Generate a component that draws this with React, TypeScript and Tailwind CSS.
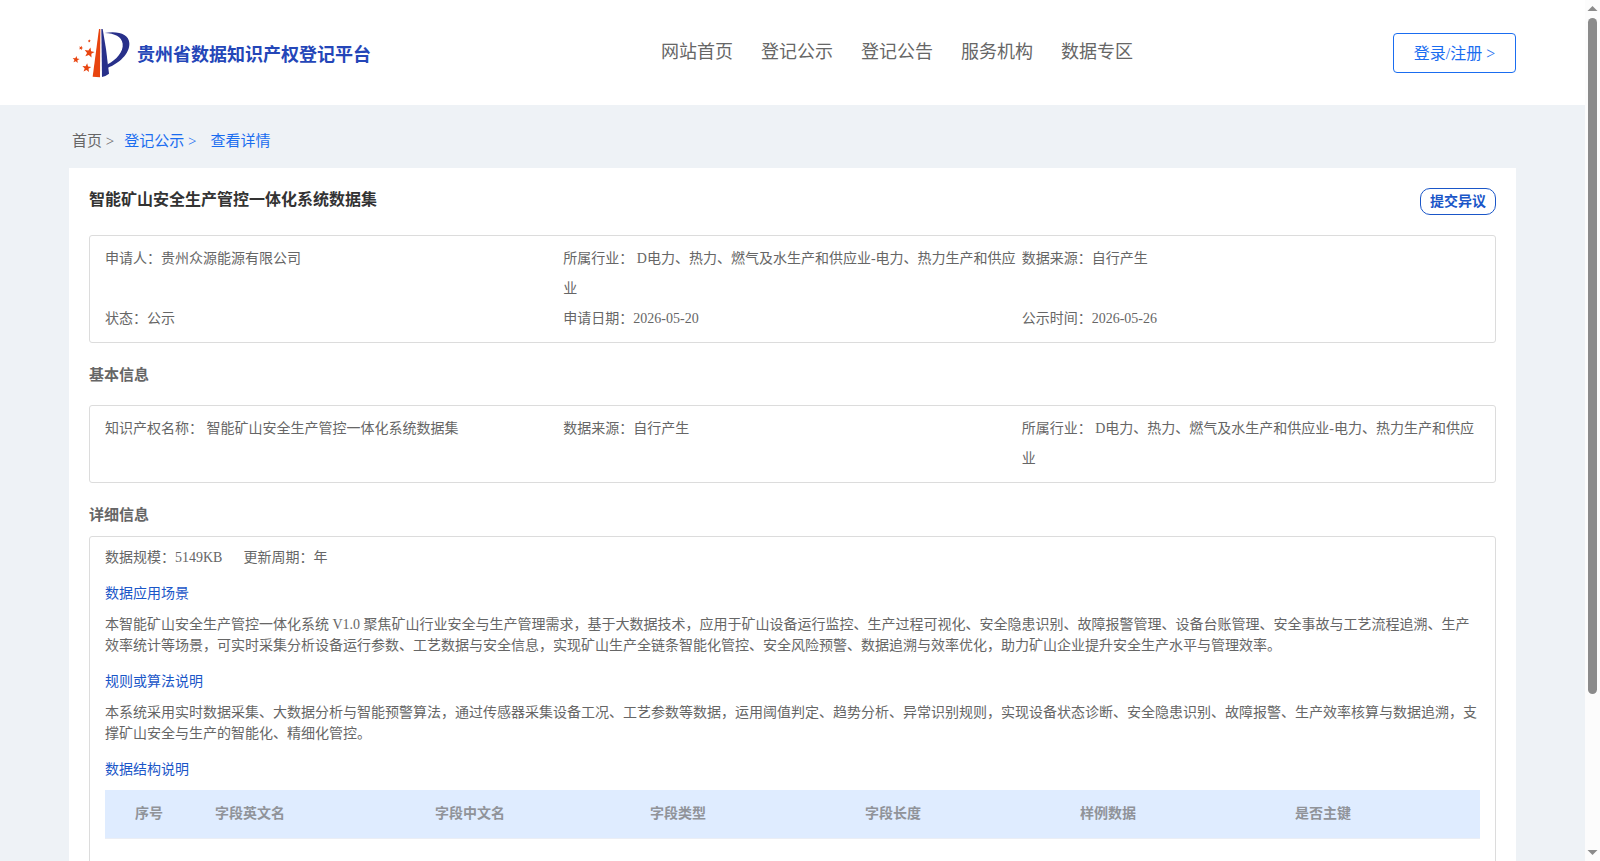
import React from 'react';

const NAV_ITEMS = ['网站首页', '登记公示', '登记公告', '服务机构', '数据专区'];

const INDUSTRY = '所属行业： D电力、热力、燃气及水生产和供应业-电力、热力生产和供应业';

const SUMMARY = [
  '申请人：贵州众源能源有限公司',
  INDUSTRY,
  '数据来源：自行产生',
  '状态：公示',
  '申请日期：2026-05-20',
  '公示时间：2026-05-26',
];

const BASIC = ['知识产权名称： 智能矿山安全生产管控一体化系统数据集', '数据来源：自行产生', INDUSTRY];

const COLUMNS = [
  { title: '序号', className: 'w-[100px] pl-[30px]' },
  { title: '字段英文名', className: 'w-[220px] pl-[10px]' },
  { title: '字段中文名', className: 'w-[215px] pl-[10px]' },
  { title: '字段类型', className: 'w-[215px] pl-[10px]' },
  { title: '字段长度', className: 'w-[215px] pl-[10px]' },
  { title: '样例数据', className: 'w-[215px] pl-[10px]' },
  { title: '是否主键', className: 'pl-[10px]' },
];

const Star: React.FC<{ x: number; y: number; r: number; turn?: number }> = ({ x, y, r, turn = 0 }) => (
  <path
    d="M0-10 2.6-3.4 9.5-3.1 4.1 1.3 5.9 8.1 0 4.3-5.9 8.1-4.1 1.3-9.5-3.1-2.6-3.4Z"
    transform={`translate(${x} ${y}) rotate(${turn}) scale(${r / 10})`}
    fill="#e8440f"
  />
);

const Logo: React.FC = () => (
  <svg viewBox="33 36 180 156" className="h-[52px] w-[60px] shrink-0" aria-hidden="true">
    <path d="M117 42h4l-1 145-22-2z" fill="#e8440f" />
    <path d="M124 42h4l10 60 9 74q-9 7-21 10z" fill="#28308a" />
    <path
      d="M134 54c42-7 72 4 74 30 2 32-32 62-64 74l-1-10c26-14 48-38 45-62-3-21-24-31-54-32z"
      fill="#28308a"
    />
    <Star x={88} y={113} r={16} turn={12} />
    <Star x={48} y={134} r={11} turn={8} />
    <Star x={80} y={159} r={14} turn={6} />
    <Star x={63} y={99} r={7} turn={20} />
    <Star x={88} y={78} r={5} turn={10} />
  </svg>
);

const Header: React.FC = () => (
  <header className="flex h-[105px] items-center justify-between bg-white px-[69px]">
    <a href="#" className="flex w-[332px] items-center gap-1.5 pl-0.5">
      <Logo />
      <span className="pt-1.5 text-[18px] font-bold whitespace-nowrap text-[#2446b8]">
        贵州省数据知识产权登记平台
      </span>
    </a>
    <nav className="flex gap-7 text-[18px] text-[#666]">
      {NAV_ITEMS.map((item) => (
        <a key={item} href="#" className="whitespace-nowrap hover:text-[#1a6df0]">
          {item}
        </a>
      ))}
    </nav>
    <button
      type="button"
      className="h-10 w-[123px] rounded-sm border border-[#1a6df0] pt-0.5 text-[16px] whitespace-nowrap text-[#1a6df0]"
    >
      登录/注册 &gt;
    </button>
  </header>
);

const InfoBox: React.FC<{ items: string[] }> = ({ items }) => (
  <ul className="grid grid-cols-3 rounded-[3px] border border-[#dcdcdc] px-[15px] py-2 leading-[30px]">
    {items.map((item) => (
      <li key={item}>{item}</li>
    ))}
  </ul>
);

const Detail: React.FC<{ title: string; children: React.ReactNode }> = ({ title, children }) => (
  <section>
    <h3 className="mt-[15px] mb-[10px] leading-[21px] text-[#1a56c8]">{title}</h3>
    {children}
  </section>
);

const ScrollBar: React.FC = () => (
  <div className="flex w-[15px] shrink-0 flex-col items-center bg-[#fcfcfc]" aria-hidden="true">
    <svg viewBox="0 0 15 18" className="h-[18px] w-[15px] shrink-0">
      <path d="M7.5 6 12.5 11h-10z" fill="#8b8b8b" />
    </svg>
    <div className="w-[9px] grow-[676] rounded-full bg-[#8b8b8b]" />
    <div className="grow-[149]" />
    <svg viewBox="0 0 15 18" className="h-[18px] w-[15px] shrink-0">
      <path d="M7.5 12 2.5 7h10z" fill="#8b8b8b" />
    </svg>
  </div>
);

const App: React.FC = () => {
  return (
    <div className="flex h-screen font-['Liberation_Serif','Noto_Sans_CJK_SC',serif] text-[14px] text-[#666]">
      <div className="min-w-0 flex-1 overflow-y-auto bg-[#eef2f6] [scrollbar-width:none]">
        <Header />

        <main className="px-[69px]">
          <nav className="flex h-[63px] items-center pt-[9px] pl-[3px] text-[15px]">
            <a href="#">首页 &gt;</a>
            <a href="#" className="ml-[10px] text-[#1a6df0]">
              登记公示 &gt;
            </a>
            <a href="#" className="ml-[14px] text-[#1a6df0]">
              查看详情
            </a>
          </nav>

          <div className="bg-white px-5 pt-5 pb-10">
            <div className="mb-5 flex items-start justify-between">
              <h1 className="text-[16px] leading-6 font-bold text-[#333]">智能矿山安全生产管控一体化系统数据集</h1>
              <button
                type="button"
                className="h-[27px] w-[76px] rounded-[10px] border border-[#1a56c8] font-bold text-[#1a56c8]"
              >
                提交异议
              </button>
            </div>

            <InfoBox items={SUMMARY} />

            <h2 className="mt-[21px] mb-[19px] text-[15px] leading-[22px] font-bold">基本信息</h2>
            <InfoBox items={BASIC} />

            <h2 className="mt-[21px] mb-[10px] text-[15px] leading-[22px] font-bold">详细信息</h2>
            <div className="rounded-[3px] border border-[#dcdcdc] px-[15px] pt-[10px] pb-8">
              <p className="flex gap-[21px] leading-[21px]">
                <span>数据规模：5149KB</span>
                <span>更新周期：年</span>
              </p>

              <Detail title="数据应用场景">
                <p className="leading-[21px]">
                  本智能矿山安全生产管控一体化系统 V1.0
                  聚焦矿山行业安全与生产管理需求，基于大数据技术，应用于矿山设备运行监控、生产过程可视化、安全隐患识别、故障报警管理、设备台账管理、安全事故与工艺流程追溯、生产效率统计等场景，可实时采集分析设备运行参数、工艺数据与安全信息，实现矿山生产全链条智能化管控、安全风险预警、数据追溯与效率优化，助力矿山企业提升安全生产水平与管理效率。
                </p>
              </Detail>

              <Detail title="规则或算法说明">
                <p className="leading-[21px]">
                  本系统采用实时数据采集、大数据分析与智能预警算法，通过传感器采集设备工况、工艺参数等数据，运用阈值判定、趋势分析、异常识别规则，实现设备状态诊断、安全隐患识别、故障报警、生产效率核算与数据追溯，支撑矿山安全与生产的智能化、精细化管控。
                </p>
              </Detail>

              <Detail title="数据结构说明">
                <table className="w-full table-fixed border-collapse">
                  <thead>
                    <tr className="h-12 border-b border-[#ebeef5] bg-[#dfecff] text-left text-[#909399]">
                      {COLUMNS.map(({ title, className }) => (
                        <th key={title} className={className}>
                          {title}
                        </th>
                      ))}
                    </tr>
                  </thead>
                  <tbody>
                    <tr>
                      <td colSpan={7} className="h-16 text-center text-[#909399]">
                        暂无数据
                      </td>
                    </tr>
                  </tbody>
                </table>
              </Detail>
            </div>
          </div>
        </main>
      </div>

      <ScrollBar />
    </div>
  );
};

export default App;
